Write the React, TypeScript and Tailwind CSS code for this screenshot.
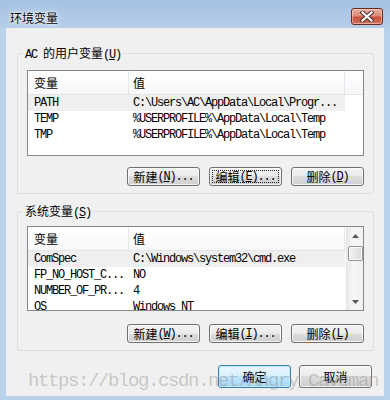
import React from "react";

const CJK = "[font-family:'Noto_Sans_CJK_SC','Noto_Sans_CJK_JP',sans-serif] text-[12px]";
const MONO = "[font-family:'Liberation_Mono','Noto_Sans_CJK_SC',monospace] text-[12px] tracking-[-1.2px]";

type BtnProps = {
  children: React.ReactNode;
  w?: string;
  h?: string;
  focus?: boolean;
  def?: boolean;
};

function Btn({ children, w = "w-[73px]", h = "h-[19px]", focus = false, def = false }: BtnProps) {
  return (
    <div
      className={`relative ${w} ${h} rounded-[3px] border flex items-center justify-center text-black ${
        def
          ? "border-[#3c7fb1] bg-[linear-gradient(#eaf6fd_0%,#d9f0fc_50%,#bee6fd_50%,#a7d9f5_100%)] shadow-[inset_0_0_0_1px_#c4e8fb]"
          : "border-[#707070] bg-[linear-gradient(#f4f4f4_0%,#ebebeb_50%,#dddddd_50%,#cfcfcf_100%)] shadow-[inset_0_0_0_1px_rgba(255,255,255,0.75)]"
      }`}
    >
      {focus && <span className="absolute inset-[2px] border border-dotted border-[#222]" />}
      <span className="relative flex items-center leading-[14px] whitespace-nowrap">{children}</span>
    </div>
  );
}

function Label({ cjk, k, dots = true }: { cjk: string; k: string; dots?: boolean }) {
  return (
    <>
      <span className={CJK}>{cjk}</span>
      <span className={MONO}>
        (<span className="underline underline-offset-[1px]">{k}</span>){dots ? "..." : ""}
      </span>
    </>
  );
}

type Row = { name: string; value: string; sel?: boolean };

function ScrollBar() {
  return (
    <div className="w-[17px] shrink-0 bg-[linear-gradient(90deg,#e9e9e9,#f6f6f6_40%,#f1f1f1)] border-l border-[#e4e4e4] flex flex-col items-center">
      <div className="h-[17px] w-full flex items-center justify-center">
        <svg width="7" height="4" viewBox="0 0 7 4">
          <path d="M3.5 0 L7 4 H0 Z" fill="#565656" />
        </svg>
      </div>
      <div className="mt-[2px] w-[15px] h-[15px] rounded-[2px] border border-[#959595] bg-[linear-gradient(90deg,#f4f4f4,#e7e7e7_50%,#d9d9d9)] shadow-[inset_0_0_0_1px_#fbfbfb]" />
      <div className="flex-1" />
      <div className="h-[17px] w-full flex items-center justify-center">
        <svg width="7" height="4" viewBox="0 0 7 4">
          <path d="M0 0 H7 L3.5 4 Z" fill="#565656" />
        </svg>
      </div>
    </div>
  );
}

function ListView({ rows, h, scroll = false }: { rows: Row[]; h: string; scroll?: boolean }) {
  return (
    <div className={`${h} border border-[#828790] bg-white flex overflow-hidden`}>
      <div className="flex-1 min-w-0 flex flex-col">
        <div className="h-[24px] shrink-0 flex border-b border-[#e5e5e5] bg-[linear-gradient(#ffffff,#f6f7f9)]">
          <div className={`w-[101px] shrink-0 border-r border-[#e3e8ee] pl-[6px] flex items-center ${CJK}`}>变量</div>
          <div className={`w-[216px] shrink-0 border-r border-[#e3e8ee] pl-[4px] flex items-center ${CJK}`}>值</div>
          <div className="flex-1" />
        </div>
        {rows.map((r) => (
          <div
            key={r.name}
            className={`w-[317px] h-[16px] shrink-0 flex items-center whitespace-nowrap overflow-hidden ${
              r.sel ? "bg-[#efefef]" : ""
            }`}
          >
            <div className={`w-[101px] shrink-0 pl-[6px] leading-[16px] overflow-hidden ${MONO}`}>{r.name}</div>
            <div className={`pl-[4px] leading-[16px] ${MONO}`}>{r.value}</div>
          </div>
        ))}
      </div>
      {scroll && <ScrollBar />}
    </div>
  );
}

const userRows: Row[] = [
  { name: "PATH", value: "C:\\Users\\AC\\AppData\\Local\\Progr...", sel: true },
  { name: "TEMP", value: "%USERPROFILE%\\AppData\\Local\\Temp" },
  { name: "TMP", value: "%USERPROFILE%\\AppData\\Local\\Temp" },
];

const sysRows: Row[] = [
  { name: "ComSpec", value: "C:\\Windows\\system32\\cmd.exe", sel: true },
  { name: "FP_NO_HOST_C...", value: "NO" },
  { name: "NUMBER_OF_PR...", value: "4" },
  { name: "OS", value: "Windows_NT" },
];

export default function App() {
  return (
    <div className="relative w-[390px] h-[400px] overflow-hidden bg-[#b9d1ea] flex flex-col">
      {/* title bar */}
      <div className="h-[28px] shrink-0 flex items-start justify-between bg-[linear-gradient(180deg,#a6c2e2,#b5cde9)]">
        <span
          className={`ml-[10px] mt-[11px] leading-[14px] text-black ${CJK} [text-shadow:0_0_6px_#fff,0_0_3px_#fff,0_0_1px_#fff]`}
        >
          环境变量
        </span>
        <div className="mt-[8px] mr-[7px] w-[32px] h-[17px] rounded-[3px] border border-[#6a2a22] bg-[linear-gradient(#eab0a2_0%,#de8c79_45%,#c9523e_55%,#d2705a_100%)] shadow-[inset_0_0_0_1px_rgba(255,220,210,0.55)] flex items-center justify-center">
          <svg width="14" height="11" viewBox="0 0 14 11">
            <path d="M2.5 1.5 L11.5 9.5 M11.5 1.5 L2.5 9.5" stroke="#4a2a2a" strokeWidth="4.2" strokeLinecap="square" />
            <path d="M2.5 1.5 L11.5 9.5 M11.5 1.5 L2.5 9.5" stroke="#ffffff" strokeWidth="2.2" strokeLinecap="square" />
          </svg>
        </div>
      </div>

      {/* client area */}
      <div className="mx-[6px] h-[368px] shrink-0 bg-[#f0f0f0] flex flex-col pl-[11px] pr-[10px]">
        <fieldset className="mt-[16px] h-[150px] shrink-0 border border-[#d5dfe5] rounded-[3px] px-[9px] pt-[7px] min-w-0">
          <legend className="ml-[-4px] px-[2px] leading-[16px] text-black">
            <span className={MONO}>AC </span>
            <span className={CJK}>的用户变量</span>
            <span className={MONO}>
              (<span className="underline underline-offset-[1px]">U</span>)
            </span>
          </legend>
          <ListView rows={userRows} h="h-[86px]" />
          <div className="mt-[11px] flex justify-end gap-[9px]">
            <Btn>
              <Label cjk="新建" k="N" />
            </Btn>
            <Btn focus>
              <Label cjk="编辑" k="E" />
            </Btn>
            <Btn>
              <Label cjk="删除" k="D" dots={false} />
            </Btn>
          </div>
        </fieldset>

        <fieldset className="mt-[8px] h-[149px] shrink-0 border border-[#d5dfe5] rounded-[3px] px-[9px] pt-[5px] min-w-0">
          <legend className="ml-[-4px] px-[2px] leading-[16px] text-black">
            <span className={CJK}>系统变量</span>
            <span className={MONO}>
              (<span className="underline underline-offset-[1px]">S</span>)
            </span>
          </legend>
          <ListView rows={sysRows} h="h-[85px]" scroll />
          <div className="mt-[13px] flex justify-end gap-[9px]">
            <Btn>
              <Label cjk="新建" k="W" />
            </Btn>
            <Btn>
              <Label cjk="编辑" k="I" />
            </Btn>
            <Btn>
              <Label cjk="删除" k="L" dots={false} />
            </Btn>
          </div>
        </fieldset>

        <div className="mt-[14px] mr-[2px] flex justify-end gap-[8px]">
          <Btn h="h-[23px]" def>
            <span className={CJK}>确定</span>
          </Btn>
          <Btn h="h-[23px]">
            <span className={CJK}>取消</span>
          </Btn>
        </div>
      </div>

      {/* watermark */}
      <div className="absolute left-[28px] top-[371px] leading-[20px] text-[19px] tracking-[-1.4px] [font-family:'Liberation_Mono',monospace] text-[rgba(140,140,140,0.42)] whitespace-nowrap pointer-events-none">
        https://blog.csdn.net/Angry_Caveman
      </div>
    </div>
  );
}
